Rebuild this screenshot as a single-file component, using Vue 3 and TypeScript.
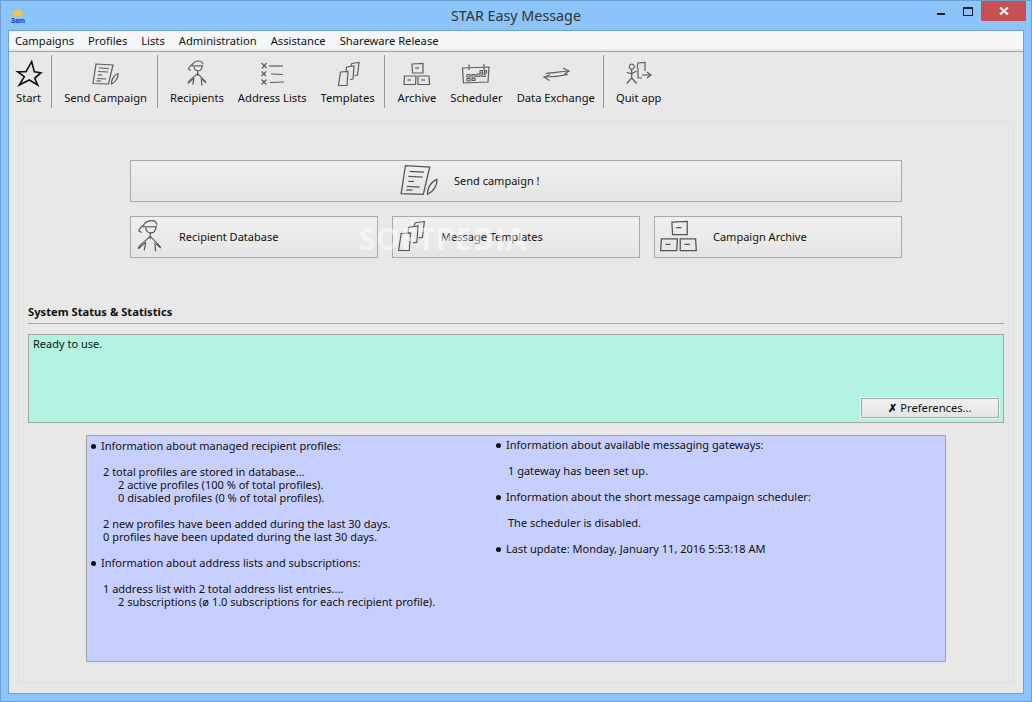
<script setup lang="ts">
/* Icon strokes, drawn on a 32x32 box */
const icons: Record<string, string[]> = {
    star: ['M18.7 3.7 L21.3 13.7 L28 14.7 L21.7 20.3 L24.7 27 L16.3 22 L6.3 27 L11.3 18.7 L4.7 13.7 L13 13.7 Z'],
    send: [
        'M6 6 L23 7 L18.5 26 L3 25.5 Z', 'M9 10 L19 10.5', 'M8 13.5 L18 14', 'M8 17 L12 17', 'M7 20.5 L16 21', 'M6.5 23 L11 23',
        'M21.5 26 C21 22 24 17 28 15.5 C28.5 19 26 24 21.5 26 Z'
    ],
    person: [
        'M11.8 6.1 C13 4 16 3 17.8 3 C20 3 21.5 4.5 21.9 6.1', 'M11.8 6.1 C9.5 7.5 8 9.5 7.5 11.2 L9.9 12.5', 'M10.6 7.9 L21.4 7.9',
        'M13 8.7 C13.2 10.5 14 12 15.4 12.5 C17.5 13 19.5 12.5 20.2 11.2 C21 10 21.4 8.5 21.4 6.9', 'M16.6 12.5 L16.6 17.7',
        'M16.6 15.6 L8.2 22.8 L7 25.4', 'M7 25.4 L13 20.3', 'M16.6 15.6 L23.8 22.8 L25 24.9 L21.4 21.6',
        'M13 20.3 L11.8 26.7', 'M20.2 20.3 L20.9 27.5'
    ],
    list: [
        'M5.5 5 L10.5 10', 'M10.5 5 L6 10.5', 'M5.5 13.5 L10 18', 'M10 13.5 L5.5 18', 'M5.5 21.5 L10.5 26.5', 'M10.5 21.5 L5.5 26.5',
        'M13 8 L27 8', 'M15 16 L27 16.5', 'M14 24.5 L28 24'
    ],
    templates: [
        'M19.5 5.5 L27 4.5 L25.5 17 L22.5 17.5', 'M14.5 9 L22 8 L21 21 L18 21.5', 'M8.5 14 L16 13.5 L15 27.5 L6.5 27.5 Z', 'M14.5 9 L14 13.5', 'M19.5 5.5 L19 8'
    ],
    archive: [
        'M11 6 L22 5.5 L22 15 L11.5 15 Z', 'M14 10 L18 10', 'M3.5 18 L15 18 L14.5 26.5 L3 26.5 Z', 'M6.5 22 L10 22',
        'M17 18 L28 18 L28.5 26.5 L17 26.5 Z', 'M20 22 L24 22'
    ],
    calendar: [
        'M2.5 10 L29 9 L28 24 L3.5 25 Z', 'M9 6.5 L9 12', 'M24 6 L24 12', 'M20 12.5 h2.5 v2.5 h-2.5 Z', 'M24.5 12.5 h2 v2.5 h-2 Z',
        'M7 16.5 h3 v2.5 h-3 Z', 'M12 16.5 h3 v2.5 h-3 Z', 'M17 16 h3 v2.5 h-3 Z', 'M22 16 h3 v2.5 h-3 Z', 'M7 20.5 h3 v2.5 h-3 Z', 'M12 20.5 h3 v2 h-3 Z'
    ],
    exchange: [
        'M6 15.5 C13 14.5 20 14 28 13', 'M23 10 L29 13 L24 16.5', 'M28 16.5 C21 18 13 19 5 19', 'M10 16.5 L4 19 L9.5 22.5'
    ],
    quit: [
        'M8.7 6.2 a2.5 2.5 0 1 0 .1 0', 'M8.7 11 L8.7 20', 'M3.7 14.5 L8.7 15.5 L13.7 13', 'M8.7 20 L3.7 25.5', 'M8.7 20 L13.7 25.5',
        'M14 10 L15 5 L22 4.5 L22 13', 'M15 10 L15 20 L19 20', 'M19 17 L27 17', 'M24 14 L28 17 L24 20'
    ]
};

const menus = ['Campaigns', 'Profiles', 'Lists', 'Administration', 'Assistance', 'Shareware Release'];

const tools = [
    [{ label: 'Start', icon: 'star' }],
    [{ label: 'Send Campaign', icon: 'send' }],
    [{ label: 'Recipients', icon: 'person' }, { label: 'Address Lists', icon: 'list' }, { label: 'Templates', icon: 'templates' }],
    [{ label: 'Archive', icon: 'archive' }, { label: 'Scheduler', icon: 'calendar' }, { label: 'Data Exchange', icon: 'exchange' }],
    [{ label: 'Quit app', icon: 'quit' }]
];

const actions = [
    { label: 'Recipient Database', icon: 'person', box: '6.5 2.5 19 25.5', width: 27 },
    { label: 'Message Templates', icon: 'templates', box: '6 4 21.5 24', width: 27 },
    { label: 'Campaign Archive', icon: 'archive', box: '2.5 5 26.5 22', width: 37 }
];

const leftInfo = [
    { text: 'Information about managed recipient profiles:', level: 0 },
    { text: '', level: 1 },
    { text: '2 total profiles are stored in database...', level: 1 },
    { text: '2 active profiles (100 % of total profiles).', level: 2 },
    { text: '0 disabled profiles (0 % of total profiles).', level: 2 },
    { text: '', level: 1 },
    { text: '2 new profiles have been added during the last 30 days.', level: 1 },
    { text: '0 profiles have been updated during the last 30 days.', level: 1 },
    { text: '', level: 1 },
    { text: 'Information about address lists and subscriptions:', level: 0 },
    { text: '', level: 1 },
    { text: '1 address list with 2 total address list entries....', level: 1 },
    { text: '2 subscriptions (ø 1.0 subscriptions for each recipient profile).', level: 2 }
];

const rightInfo = [
    { text: 'Information about available messaging gateways:', level: 0 },
    { text: '', level: 1 },
    { text: '1 gateway has been set up.', level: 1 },
    { text: '', level: 1 },
    { text: 'Information about the short message campaign scheduler:', level: 0 },
    { text: '', level: 1 },
    { text: 'The scheduler is disabled.', level: 1 },
    { text: '', level: 1 },
    { text: 'Last update: Monday, January 11, 2016 5:53:18 AM', level: 0 }
];
</script>

<template>
    <div class="window">
        <header class="titlebar">
            <svg class="app-icon" viewBox="0 0 16 16">
                <polygon points="8,1 10,4.5 15,5 11.5,7.5 12.5,10.5 8,9 3.5,10.5 4.5,7.5 1,5 6,4.5" fill="#f5c842" />
                <text x="1" y="15.5" font-size="7" font-weight="700" textLength="14" fill="#1a2fd0" font-family="Liberation Sans, sans-serif">3am</text>
            </svg>
            <span class="titlebar__text">STAR Easy Message</span>
            <div class="controls">
                <span class="controls__min"></span>
                <span class="controls__max"></span>
                <span class="controls__close">
                    <svg viewBox="0 0 10 8" width="10" height="8">
                        <path d="M1 0.5 L9 7.5 M9 0.5 L1 7.5" stroke="#fff" stroke-width="2" />
                    </svg>
                </span>
            </div>
        </header>

        <div class="frame">
            <nav class="menu">
                <span v-for="menu in menus" :key="menu">{{ menu }}</span>
            </nav>

            <div class="toolbar">
                <div v-for="(group, index) in tools" :key="index" class="toolbar__group">
                    <div v-for="tool in group" :key="tool.label" class="tool">
                        <svg class="tool__icon" :class="{ 'tool__icon--dark': tool.icon === 'star' }" viewBox="0 0 32 32">
                            <path v-for="d in icons[tool.icon]" :key="d" :d="d" />
                        </svg>
                        <span>{{ tool.label }}</span>
                    </div>
                </div>
            </div>

            <main class="panel">
                <section class="actions">
                    <button class="action action--wide">
                        <svg class="action__icon" viewBox="2.5 5.5 26 21" width="38" height="30">
                            <path v-for="d in icons.send" :key="d" :d="d" />
                        </svg>
                        <span>Send campaign !</span>
                    </button>
                    <button v-for="action in actions" :key="action.label" class="action">
                        <svg class="action__icon" :viewBox="action.box" :width="action.width" height="32">
                            <path v-for="d in icons[action.icon]" :key="d" :d="d" />
                        </svg>
                        <span>{{ action.label }}</span>
                    </button>
                    <span class="watermark">SOFTPEDIA</span>
                </section>

                <h2 class="status-title">System Status &amp; Statistics</h2>

                <section class="status">
                    <p>Ready to use.</p>
                    <button class="prefs"><b>✗</b> Preferences...</button>
                </section>

                <section class="info">
                    <div class="info__left">
                        <div v-for="(line, index) in leftInfo" :key="index" class="info__line" :class="`info__line--${line.level}`">{{ line.text }}</div>
                    </div>
                    <div class="info__right">
                        <div v-for="(line, index) in rightInfo" :key="index" class="info__line" :class="`info__line--${line.level}`">{{ line.text }}</div>
                    </div>
                </section>
            </main>
        </div>
    </div>
</template>

<style scoped>
.window {
    display: flex;
    flex-direction: column;
    width: 1032px;
    height: 702px;
    box-sizing: border-box;
    padding: 0 7px 7px;
    border: 1px solid #6c9fd0;
    background-color: #8bc5fb;
    font-family: "Noto Sans", "Open Sans", sans-serif;
    font-size: 11.2px;
    color: #111;
    overflow: hidden;
}

.titlebar {
    position: relative;
    display: flex;
    align-items: center;
    justify-content: center;
    flex: none;
    height: 29px;
}

.app-icon {
    position: absolute;
    left: 2px;
    top: 6px;
    width: 16px;
    height: 16px;
}

.titlebar__text {
    font-size: 14.3px;
    color: #333;
}

.controls {
    position: absolute;
    right: -2px;
    top: 0;
    display: flex;
    align-items: flex-start;
}

.controls__min {
    width: 8px;
    height: 2px;
    margin-top: 12px;
    margin-right: 18px;
    background-color: #222;
}

.controls__max {
    width: 10px;
    height: 9px;
    box-sizing: border-box;
    margin-top: 6px;
    margin-right: 8px;
    border: 1px solid #222;
    border-top-width: 2px;
}

.controls__close {
    display: flex;
    align-items: center;
    justify-content: center;
    width: 45px;
    height: 20px;
    background-color: #c75050;
}

.frame {
    display: flex;
    flex-direction: column;
    flex: 1;
    min-height: 0;
    border: 1px solid #6ea2d4;
    background-color: #e8e8e8;
}

.menu {
    display: flex;
    flex: none;
    gap: 14px;
    height: 18px;
    padding: 0 6px;
    align-items: center;
    background-color: #f5f6f8;
    border-bottom: 2px solid #e9e9e9;
    box-shadow: 0 1px 0 #a4a4a4;
}

.toolbar {
    display: flex;
    flex: none;
    height: 61px;
    margin-top: 2px;
    padding: 2px 0 0 7px;
    box-sizing: border-box;
}

.toolbar__group {
    display: flex;
    gap: 14px;
    height: 53px;
    padding-right: 9px;
    margin-right: 12px;
    border-right: 1px solid #999;
}

.toolbar__group:nth-child(-n+2) {
    padding-right: 10px;
}

.toolbar__group:nth-child(3) {
    margin-right: 13px;
}

.toolbar__group:nth-child(4) {
    padding-right: 8px;
}

.toolbar__group:last-child {
    border-right: 0;
}

.tool {
    display: flex;
    flex-direction: column;
    align-items: center;
    white-space: nowrap;
}

.tool__icon {
    flex: none;
    width: 32px;
    height: 32px;
    margin: 3px -10px 0;
    fill: none;
    stroke: #5e5e5e;
    stroke-width: 1.2;
}

.tool__icon--dark {
    stroke: #111;
    stroke-width: 1.6;
}

.panel {
    display: flex;
    flex-direction: column;
    flex: 1;
    min-height: 0;
    margin: 7px 9px 10px;
    padding: 38px 9px 0;
    border: 1px solid #e0e0e0;
}

.actions {
    position: relative;
    display: grid;
    grid-template-columns: repeat(3, 248px);
    gap: 14px;
    width: 772px;
    margin-left: 102px;
}

.action {
    display: flex;
    align-items: center;
    gap: 16px;
    height: 42px;
    padding: 0 0 2px 5px;
    border: 1px solid #aaa;
    background: linear-gradient(#f0f0f0, #e5e5e5);
    font: inherit;
    font-size: 11px;
    color: inherit;
}

.action--wide {
    grid-column: 1 / span 3;
    padding-left: 269px;
}

.action__icon {
    flex: none;
    fill: none;
    stroke: #555;
    stroke-width: 0.9;
}

.watermark {
    position: absolute;
    left: 229px;
    top: 58px;
    font-family: "Open Sans", sans-serif;
    font-size: 30px;
    font-weight: 700;
    letter-spacing: 0.6px;
    color: rgba(255, 255, 255, 0.5);
    pointer-events: none;
}

.status-title {
    margin: 45px 0 0;
    padding-bottom: 3px;
    border-bottom: 1px solid #a8a8a8;
    font-size: 11.2px;
    font-weight: 700;
    line-height: 17px;
}

.status {
    position: relative;
    height: 89px;
    box-sizing: border-box;
    margin-top: 10px;
    padding: 2px 4px;
    border: 1px solid #a4a4a4;
    background-color: #b2f3e1;
}

.status p {
    margin: 0;
    font-size: 11px;
    line-height: 13px;
}

.prefs {
    position: absolute;
    right: 4px;
    bottom: 4px;
    width: 138px;
    height: 20px;
    padding: 0 0 2px;
    border: 1px solid #aaa;
    outline: 1px solid #e6f7f1;
    background: linear-gradient(#f0f0f0, #e5e5e5);
    font: inherit;
    color: inherit;
}

.info {
    display: flex;
    height: 227px;
    box-sizing: border-box;
    width: 860px;
    margin: 12px 0 0 58px;
    padding: 3px 4px;
    border: 1px solid #a4a4a4;
    background-color: #c7cfff;
    font-size: 11px;
}

.info__left {
    width: 405px;
    flex: none;
}

.info__right {
    margin-top: -1px;
}

.info__line {
    position: relative;
    height: 13px;
    line-height: 13px;
    white-space: pre;
}

.info__line--0 {
    padding-left: 10px;
}

.info__line--0::before {
    content: '';
    position: absolute;
    left: 0;
    top: 5px;
    width: 5px;
    height: 5px;
    border-radius: 50%;
    background-color: #111;
}

.info__line--1 {
    padding-left: 12px;
}

.info__line--2 {
    padding-left: 27px;
}
</style>

<style>
html,
body {
    margin: 0;
    overflow: hidden;
}
</style>
